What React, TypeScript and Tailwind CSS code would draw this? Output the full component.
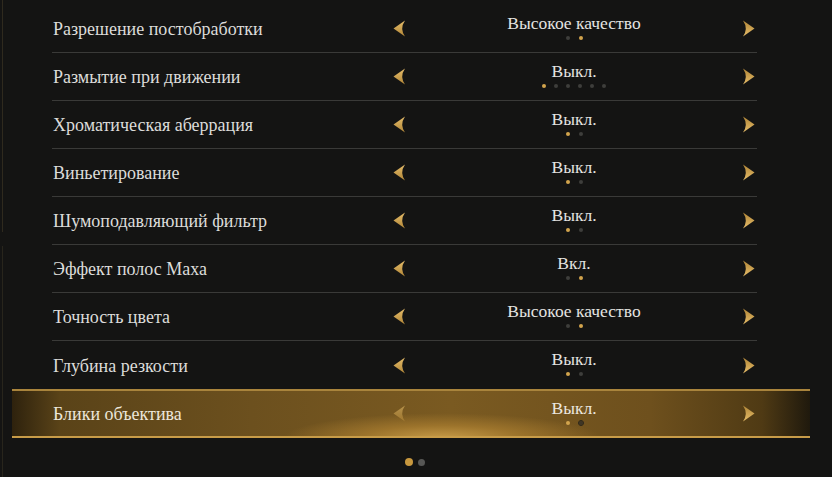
import React from "react"

type Setting = {
  label: string
  value: string
  dots: number
  active: number
}

const settings: Setting[] = [
  { label: "Разрешение постобработки", value: "Высокое качество", dots: 2, active: 1 },
  { label: "Размытие при движении", value: "Выкл.", dots: 6, active: 0 },
  { label: "Хроматическая аберрация", value: "Выкл.", dots: 2, active: 0 },
  { label: "Виньетирование", value: "Выкл.", dots: 2, active: 0 },
  { label: "Шумоподавляющий фильтр", value: "Выкл.", dots: 2, active: 0 },
  { label: "Эффект полос Маха", value: "Вкл.", dots: 2, active: 1 },
  { label: "Точность цвета", value: "Высокое качество", dots: 2, active: 1 },
  { label: "Глубина резкости", value: "Выкл.", dots: 2, active: 0 },
]

function Arrow({ dir, dim }: { dir: "left" | "right"; dim?: boolean }) {
  return (
    <svg
      width="13"
      height="17"
      viewBox="0 0 13 17"
      className={`${dir === "right" ? "rotate-180" : ""} ${dim ? "opacity-60" : ""} shrink-0`}
    >
      <defs>
        <linearGradient id={`g-${dir}`} x1="0" y1="0" x2="0" y2="1">
          <stop offset="0" stopColor="#e6bd6a" />
          <stop offset="1" stopColor="#b18637" />
        </linearGradient>
      </defs>
      <path d="M12 0.5 L0.5 8.5 L12 16.5 Q6.5 8.5 12 0.5 Z" fill={`url(#g-${dir})`} />
    </svg>
  )
}

function Dots({ count, active, highlight }: { count: number; active: number; highlight?: boolean }) {
  return (
    <div className={`flex items-center ${count > 2 ? "gap-[8px]" : "gap-[9px]"}`}>
      {Array.from({ length: count }).map((_, i) => (
        <span
          key={i}
          className={`block w-[4px] h-[4px] rounded-full ${
            i === active
              ? "bg-[#d2a44d]"
              : highlight
              ? "bg-[#3d3526] outline outline-[#2a251a]"
              : "bg-[#3e3e3c]"
          }`}
        />
      ))}
    </div>
  )
}

function Value({ text, dots, active, highlight }: { text: string; dots: number; active: number; highlight?: boolean }) {
  return (
    <div className="flex-1 flex flex-col items-center gap-[4px] pb-[4px]">
      <div className={`text-[17.5px] leading-[18px] ${highlight ? "text-[#ece8e0]" : "text-[#e4e4e2]"}`}>{text}</div>
      <Dots count={dots} active={active} highlight={highlight} />
    </div>
  )
}

function Row({ s, last }: { s: Setting; last?: boolean }) {
  return (
    <div className={`flex items-center h-[48px] ml-[52px] w-[705px] ${last ? "" : "border-b border-[#3a3a38]"}`}>
      <div className="w-[341px] pl-[1px] pt-[2px] text-[18px] text-[#dcdcda]">{s.label}</div>
      <Arrow dir="left" />
      <Value text={s.value} dots={s.dots} active={s.active} />
      <Arrow dir="right" />
      <div className="w-[2px]" />
    </div>
  )
}

export default function App() {
  return (
    <div
      className="relative w-[832px] h-[477px] overflow-hidden bg-[#141413]"
      style={{ fontFamily: '"Liberation Serif", "DejaVu Serif", serif' }}
    >
      <div className="absolute left-[2px] top-0 h-[232px] w-px bg-[#2f2a1e]" />
      <div className="absolute left-[2px] top-[246px] h-[231px] w-px bg-[#28251c]" />

      <div className="flex flex-col pt-[5px]">
        {settings.map((s, i) => (
          <Row key={s.label} s={s} last={i === settings.length - 1} />
        ))}

        <div className="relative ml-[12px] w-[798px] h-[49px] border-t-2 border-b-2 border-t-[#a9843c] border-b-[#c89c48] bg-[linear-gradient(90deg,#2e220d_0%,#5a4318_6%,#6c501e_30%,#7a5a21_55%,#6e501d_80%,#4f3a14_94%,#1f190d_100%)] overflow-hidden">
          <div className="absolute left-[270px] top-[22px] w-[320px] h-[50px] rounded-full bg-[radial-gradient(ellipse_at_center,#d9aa50_0%,#a57a2e_35%,transparent_70%)] opacity-80" />
          <div className="relative flex items-center h-full pl-[40px]">
            <div className="w-[341px] pl-[1px] pt-[2px] text-[18px] text-[#ece6da]">Блики объектива</div>
            <Arrow dir="left" dim />
            <Value text="Выкл." dots={2} active={0} highlight />
            <Arrow dir="right" />
            <div className="w-[55px]" />
          </div>
        </div>

        <div className="flex justify-center items-center gap-[5px] mt-[20px] pr-[2px]">
          <span className="block w-[8px] h-[8px] rounded-full bg-[#c8983e]" />
          <span className="block w-[7px] h-[7px] rounded-full bg-[#575755]" />
        </div>
      </div>
    </div>
  )
}
